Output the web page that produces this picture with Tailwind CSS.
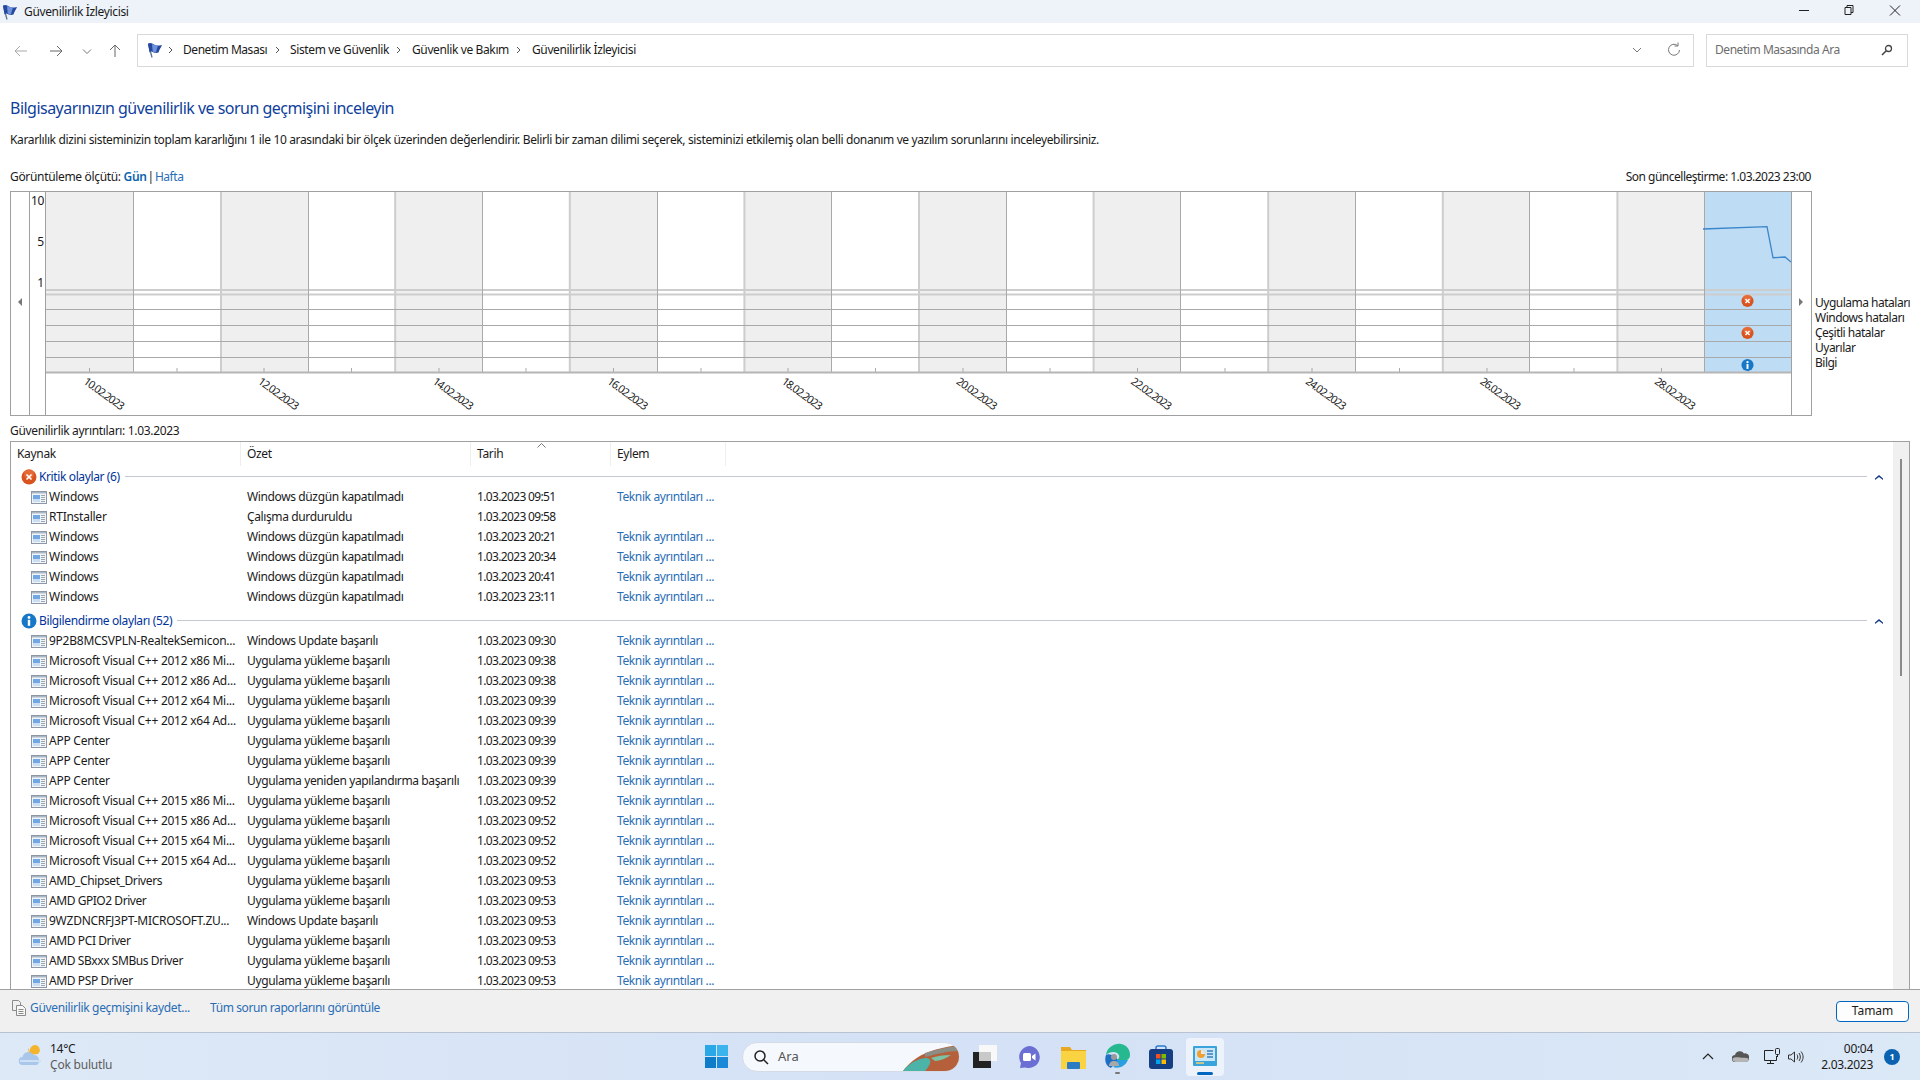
<!doctype html>
<html lang="tr"><head><meta charset="utf-8"><title>Güvenilirlik İzleyicisi</title>
<script src="https://cdn.jsdelivr.net/npm/@tailwindcss/browser@4"></script></head>
<body class="m-0">
<svg class="hidden" width="0" height="0">
<defs>
<symbol id="app" viewBox="0 0 16 16"><rect x="0.5" y="2.500" width="15" height="12" fill="#f1f4f8" stroke="#8c98a5"/><rect x="1" y="3" width="14" height="1.500" fill="#a9b6c4"/><rect x="2" y="6" width="7" height="7" fill="#6fa8e4"/><rect x="2" y="10" width="7" height="3" fill="#c9def3"/><path d="M10 6.500h4M10 8.500h4M10 10.500h4M10 12.500h4" stroke="#9aa6b2"/></symbol>
<symbol id="flag" viewBox="0 0 16 16"><path d="M1.500 2L5 15.500" stroke="#5f7390" stroke-width="1.300"/><path d="M1 1.500c3-1.500 5 .5 7 1.500s4 .5 7 0c-1 2.500-3 5-3.500 7.500-3 1-5 0-7-1-1 0-1.500 .5-2 1z" fill="#24479f"/><path d="M5 2.200c1 .2 2 .3 3 .8 1 .5 2 .6 3 .5-.5 2-1.500 4-2 6.900-1.200 0-2.200-.4-3.300-.9z" fill="#6f92dc"/></symbol>
<symbol id="err" viewBox="0 0 16 16"><circle cx="8" cy="8" r="7.500" fill="#d9531e"/><circle cx="8" cy="5" r="5" fill="#ec7a45" opacity=".6"/><path d="M5.500 5.500l5 5M10.500 5.500l-5 5" stroke="#fff" stroke-width="1.700"/></symbol>
<symbol id="info" viewBox="0 0 16 16"><circle cx="8" cy="8" r="7.500" fill="#1878c8"/><circle cx="8" cy="4.500" r="1.400" fill="#fff"/><rect x="6.800" y="6.800" width="2.400" height="6" fill="#fff"/></symbol>
</defs></svg>

<div class="flex h-[1080px] w-[1920px] flex-col overflow-hidden bg-white text-[12px] text-[#1a1a1a] font-['Noto_Sans',sans-serif]">

<!-- title bar -->
<div class="flex h-[23px] shrink-0 items-center bg-[#eef3fa] pl-[2px]">
<svg class="mr-[6px] h-[16px] w-[16px] shrink-0"><use href="#flag"/></svg>
<span class="tracking-[-0.35px]">Güvenilirlik İzleyicisi</span>
<div class="ml-auto flex items-center">
<svg width="45" height="23" viewBox="0 0 45 23"><path d="M15 10.500h10" stroke="#222"/></svg>
<svg width="45" height="23" viewBox="0 0 45 23"><path d="M16 7.500h6v7h-6zM18 7.500v-2h6v7h-2" fill="none" stroke="#222"/></svg>
<svg width="46" height="23" viewBox="0 0 46 23"><path d="M16 5.500l10 10M26 5.500l-10 10" stroke="#222"/></svg>
</div>
</div>

<!-- address row -->
<div class="flex h-[54px] shrink-0 items-center pl-[13px]">
<svg class="mt-[1px] shrink-0" width="124" height="16" viewBox="0 0 124 16" fill="none">
<path d="M14 8H2M7 3L2 8l5 5" stroke="#a8a8a8"/>
<path d="M37 8h12M44 3l5 5-5 5" stroke="#666"/>
<path d="M70 6.500l4 4 4-4" stroke="#777"/>
<path d="M102 14V2M97 7l5-5 5 5" stroke="#666"/>
</svg>
<div class="flex h-[33px] w-[1557px] shrink-0 items-center border border-[#d9d9d9] pl-[9px]">
<svg class="h-[16px] w-[16px] shrink-0"><use href="#flag"/></svg>
<svg class="ml-[5px] shrink-0" width="6" height="8" viewBox="0 0 6 8"><path d="M1 1l3 3-3 3" fill="none" stroke="#555"/></svg>
<span class="ml-[9px] w-[92px] shrink-0 whitespace-nowrap tracking-[-0.45px]">Denetim Masası</span>
<svg class="shrink-0" width="6" height="8" viewBox="0 0 6 8"><path d="M1 1l3 3-3 3" fill="none" stroke="#555"/></svg>
<span class="ml-[9px] w-[106px] shrink-0 whitespace-nowrap tracking-[-0.38px]">Sistem ve Güvenlik</span>
<svg class="shrink-0" width="6" height="8" viewBox="0 0 6 8"><path d="M1 1l3 3-3 3" fill="none" stroke="#555"/></svg>
<span class="ml-[10px] w-[104px] shrink-0 whitespace-nowrap tracking-[-0.38px]">Güvenlik ve Bakım</span>
<svg class="shrink-0" width="6" height="8" viewBox="0 0 6 8"><path d="M1 1l3 3-3 3" fill="none" stroke="#555"/></svg>
<span class="ml-[10px] whitespace-nowrap tracking-[-0.38px]">Güvenilirlik İzleyicisi</span>
<svg class="ml-auto mr-[13px] shrink-0" width="48" height="16" viewBox="0 0 48 16" fill="none"><path d="M1 6l4 4 4-4" stroke="#777"/><path d="M45.500 3.500a5.500 5.500 0 1 0 2 4.500M46 .5v3.500h-3.500" stroke="#777"/></svg>
</div>
<div class="ml-[12px] flex h-[33px] w-[202px] shrink-0 items-center border border-[#d9d9d9] pl-[8px] pr-[14px]">
<span class="text-[#6d6d6d] tracking-[-0.45px]">Denetim Masasında Ara</span>
<svg class="ml-auto shrink-0" width="12" height="12" viewBox="0 0 12 12" fill="none"><circle cx="7.500" cy="4.500" r="3" stroke="#444" stroke-width="1.300"/><path d="M5 7l-4 4" stroke="#444" stroke-width="1.600"/></svg>
</div>
</div>

<!-- heading -->
<div class="shrink-0 pl-[10px]">
<div class="mt-[20px] h-[22px] text-[16px] leading-[22px] text-[#0f3f9c] tracking-[-0.52px]">Bilgisayarınızın güvenilirlik ve sorun geçmişini inceleyin</div>
<div class="mt-[12px] h-[18px] leading-[18px] tracking-[-0.37px]">Kararlılık dizini sisteminizin toplam kararlığını 1 ile 10 arasındaki bir ölçek üzerinden değerlendirir. Belirli bir zaman dilimi seçerek, sisteminizi etkilemiş olan belli donanım ve yazılım sorunlarını inceleyebilirsiniz.</div>
<div class="mt-[19px] flex h-[18px] w-[1801px] items-center leading-[18px] tracking-[-0.33px]">
<span>Görüntüleme ölçütü:&nbsp;</span><span class="font-semibold text-[#0a63b0]">Gün</span><span class="mx-[1px]">|</span><span class="tracking-[-0.45px] text-[#2a6db5]">Hafta</span>
<span class="ml-auto tracking-[-0.5px]">Son güncelleştirme: 1.03.2023 23:00</span>
</div>
</div>

<!-- chart -->
<div class="mt-[5px] flex h-[225px] shrink-0 pl-[10px]">
<div class="flex h-[225px] w-[1802px] shrink-0 border border-[#a0a0a0]">
<div class="flex w-[19px] shrink-0 items-center justify-center border-r border-[#a0a0a0] pb-[3px]">
<svg width="5" height="8" viewBox="0 0 5 8"><path d="M4 0v8L0 4z" fill="#777"/></svg>
</div>
<div class="relative w-[16px] shrink-0 border-r border-[#a0a0a0] text-right">
<span class="absolute right-[1px] top-[1px] leading-[16px] tracking-[-0.4px]">10</span>
<span class="absolute right-[1px] top-[42px] leading-[16px]">5</span>
<span class="absolute right-[1px] top-[83px] leading-[16px]">1</span>
</div>
<svg class="shrink-0" width="1745" height="223" viewBox="0 0 1745 223">
<g fill="#efefef">
<rect x="0" y="0" width="87.300" height="180"/><rect x="174.600" y="0" width="87.300" height="180"/><rect x="349.200" y="0" width="87.300" height="180"/><rect x="523.800" y="0" width="87.300" height="180"/><rect x="698.400" y="0" width="87.300" height="180"/><rect x="873" y="0" width="87.300" height="180"/><rect x="1047.600" y="0" width="87.300" height="180"/><rect x="1222.200" y="0" width="87.300" height="180"/><rect x="1396.800" y="0" width="87.300" height="180"/><rect x="1571.400" y="0" width="87.300" height="180"/>
</g>
<rect x="1658.500" y="0" width="86.500" height="180" fill="#bfdcf5"/>
<g stroke="#cdcdcd" stroke-width="2">
<path d="M175 0v180M349.200 0v180M523.800 0v180M698.400 0v180M873 0v180M1047.600 0v180M1222.200 0v180M1396.800 0v180M1571.400 0v180"/>
<path d="M0 98H1745M0 102.500H1745"/>
</g>
<g stroke="#a9a9a9" stroke-width="1">
<path d="M87.500 0v180M262.500 0v180M436.500 0v180M611.500 0v180M785.500 0v180M960.500 0v180M1134.500 0v180M1309.500 0v180M1483.500 0v180M1658.500 0v180"/>
<path d="M0 117.500H1745M0 133.500H1745M0 149.500H1745M0 165.500H1745"/>
<path d="M43.500 176v5M131 176v5M218 176v5M305.500 176v5M393 176v5M480 176v5M567.500 176v5M655 176v5M742 176v5M829.500 176v5M917 176v5M1004 176v5M1091.500 176v5M1179 176v5M1266 176v5M1353.500 176v5M1441 176v5M1528 176v5M1615.500 176v5M1702.500 176v5"/>
</g>
<path d="M0 180.500H1745" stroke="#b5b5b5" stroke-width="2"/>
<path d="M1657 37L1721 34.700L1727 65.700L1739 65L1745 70" fill="none" stroke="#3a86c8" stroke-width="1.300"/>
<use href="#err" x="1695" y="102.500" width="13" height="13"/>
<use href="#err" x="1695" y="134.500" width="13" height="13"/>
<use href="#info" x="1695" y="166.500" width="13" height="13"/>
<g font-size="11" fill="#1a1a1a" text-anchor="middle" letter-spacing="-1">
<text transform="translate(55.500 204.500) rotate(36)">10.02.2023</text>
<text transform="translate(230 204.500) rotate(36)">12.02.2023</text>
<text transform="translate(404.600 204.500) rotate(36)">14.02.2023</text>
<text transform="translate(579.200 204.500) rotate(36)">16.02.2023</text>
<text transform="translate(753.700 204.500) rotate(36)">18.02.2023</text>
<text transform="translate(928.300 204.500) rotate(36)">20.02.2023</text>
<text transform="translate(1102.800 204.500) rotate(36)">22.02.2023</text>
<text transform="translate(1277.400 204.500) rotate(36)">24.02.2023</text>
<text transform="translate(1451.900 204.500) rotate(36)">26.02.2023</text>
<text transform="translate(1626.500 204.500) rotate(36)">28.02.2023</text>
</g>
</svg>
<div class="flex w-[20px] shrink-0 items-center justify-center border-l border-[#a0a0a0] pb-[3px]">
<svg width="5" height="8" viewBox="0 0 5 8"><path d="M0 0v8l4-4z" fill="#777"/></svg>
</div>
</div>
<div class="ml-[3px] mt-[104px] flex flex-col whitespace-nowrap leading-[15px] tracking-[-0.5px]">
<span>Uygulama hataları</span><span>Windows hataları</span><span>Çeşitli hatalar</span><span>Uyarılar</span><span>Bilgi</span>
</div>
</div>

<div class="mt-[6px] h-[18px] shrink-0 pl-[10px] leading-[18px] tracking-[-0.33px]">Güvenilirlik ayrıntıları: 1.03.2023</div>

<!-- table -->
<div class="ml-[10px] mt-[1px] flex h-[548px] w-[1900px] shrink-0 overflow-hidden border border-b-0 border-[#a0a0a0] tracking-[-0.38px]">
<div class="relative min-w-0 flex-1 overflow-hidden">
<div class="flex h-[24px] items-center tracking-[-0.33px]">
<div class="h-[24px] w-[230px] border-r border-[#eeeeee] pl-[6px] leading-[24px]">Kaynak</div>
<div class="h-[24px] w-[230px] border-r border-[#eeeeee] pl-[6px] leading-[24px]">Özet</div>
<div class="relative h-[24px] w-[140px] border-r border-[#eeeeee] pl-[6px] leading-[24px]">Tarih
<svg class="absolute left-[66px] top-[1px]" width="9" height="5" viewBox="0 0 9 5"><path d="M.5 4.500l4-4 4 4" fill="none" stroke="#777"/></svg>
</div>
<div class="h-[24px] w-[115px] border-r border-[#eeeeee] pl-[6px] leading-[24px]">Eylem</div>
</div>

<div class="flex h-[21px] items-center pl-[10px] text-[#003399]">
<svg class="mr-[2px] h-[16px] w-[16px] shrink-0"><use href="#err"/></svg><span>Kritik olaylar (6)</span>
<div class="ml-[5px] h-px flex-1 bg-[#c3c8d3]"></div>
<svg class="ml-[8px] mr-[10px] shrink-0" width="8" height="6" viewBox="0 0 8 6"><path d="M0 4.500L4 1l4 3.500V6L4 3 0 6z" fill="#123a84"/></svg>
</div>
<div class="flex h-[20px] items-center pl-[20px]"><svg class="mr-[2px] h-[16px] w-[16px] shrink-0"><use href="#app"/></svg><span class="w-[198px] whitespace-nowrap tracking-[-0.25px]">Windows</span><span class="w-[230px] whitespace-nowrap">Windows düzgün kapatılmadı</span><span class="w-[140px] whitespace-nowrap tracking-[-0.65px]">1.03.2023 09:51</span><span class="text-[#2a6db5]">Teknik ayrıntıları ...</span></div>
<div class="flex h-[20px] items-center pl-[20px]"><svg class="mr-[2px] h-[16px] w-[16px] shrink-0"><use href="#app"/></svg><span class="w-[198px] whitespace-nowrap tracking-[-0.25px]">RTInstaller</span><span class="w-[230px] whitespace-nowrap">Çalışma durduruldu</span><span class="w-[140px] whitespace-nowrap tracking-[-0.65px]">1.03.2023 09:58</span></div>
<div class="flex h-[20px] items-center pl-[20px]"><svg class="mr-[2px] h-[16px] w-[16px] shrink-0"><use href="#app"/></svg><span class="w-[198px] whitespace-nowrap tracking-[-0.25px]">Windows</span><span class="w-[230px] whitespace-nowrap">Windows düzgün kapatılmadı</span><span class="w-[140px] whitespace-nowrap tracking-[-0.65px]">1.03.2023 20:21</span><span class="text-[#2a6db5]">Teknik ayrıntıları ...</span></div>
<div class="flex h-[20px] items-center pl-[20px]"><svg class="mr-[2px] h-[16px] w-[16px] shrink-0"><use href="#app"/></svg><span class="w-[198px] whitespace-nowrap tracking-[-0.25px]">Windows</span><span class="w-[230px] whitespace-nowrap">Windows düzgün kapatılmadı</span><span class="w-[140px] whitespace-nowrap tracking-[-0.65px]">1.03.2023 20:34</span><span class="text-[#2a6db5]">Teknik ayrıntıları ...</span></div>
<div class="flex h-[20px] items-center pl-[20px]"><svg class="mr-[2px] h-[16px] w-[16px] shrink-0"><use href="#app"/></svg><span class="w-[198px] whitespace-nowrap tracking-[-0.25px]">Windows</span><span class="w-[230px] whitespace-nowrap">Windows düzgün kapatılmadı</span><span class="w-[140px] whitespace-nowrap tracking-[-0.65px]">1.03.2023 20:41</span><span class="text-[#2a6db5]">Teknik ayrıntıları ...</span></div>
<div class="flex h-[20px] items-center pl-[20px]"><svg class="mr-[2px] h-[16px] w-[16px] shrink-0"><use href="#app"/></svg><span class="w-[198px] whitespace-nowrap tracking-[-0.25px]">Windows</span><span class="w-[230px] whitespace-nowrap">Windows düzgün kapatılmadı</span><span class="w-[140px] whitespace-nowrap tracking-[-0.65px]">1.03.2023 23:11</span><span class="text-[#2a6db5]">Teknik ayrıntıları ...</span></div>

<div class="mt-[3px] flex h-[21px] items-center pl-[10px] text-[#003399]">
<svg class="mr-[2px] h-[16px] w-[16px] shrink-0"><use href="#info"/></svg><span>Bilgilendirme olayları (52)</span>
<div class="ml-[5px] h-px flex-1 bg-[#c3c8d3]"></div>
<svg class="ml-[8px] mr-[10px] shrink-0" width="8" height="6" viewBox="0 0 8 6"><path d="M0 4.500L4 1l4 3.500V6L4 3 0 6z" fill="#123a84"/></svg>
</div>
<div class="flex h-[20px] items-center pl-[20px]"><svg class="mr-[2px] h-[16px] w-[16px] shrink-0"><use href="#app"/></svg><span class="w-[198px] whitespace-nowrap tracking-[-0.25px]">9P2B8MCSVPLN-RealtekSemicon...</span><span class="w-[230px] whitespace-nowrap">Windows Update başarılı</span><span class="w-[140px] whitespace-nowrap tracking-[-0.65px]">1.03.2023 09:30</span><span class="text-[#2a6db5]">Teknik ayrıntıları ...</span></div>
<div class="flex h-[20px] items-center pl-[20px]"><svg class="mr-[2px] h-[16px] w-[16px] shrink-0"><use href="#app"/></svg><span class="w-[198px] whitespace-nowrap tracking-[-0.25px]">Microsoft Visual C++ 2012 x86 Mi...</span><span class="w-[230px] whitespace-nowrap">Uygulama yükleme başarılı</span><span class="w-[140px] whitespace-nowrap tracking-[-0.65px]">1.03.2023 09:38</span><span class="text-[#2a6db5]">Teknik ayrıntıları ...</span></div>
<div class="flex h-[20px] items-center pl-[20px]"><svg class="mr-[2px] h-[16px] w-[16px] shrink-0"><use href="#app"/></svg><span class="w-[198px] whitespace-nowrap tracking-[-0.25px]">Microsoft Visual C++ 2012 x86 Ad...</span><span class="w-[230px] whitespace-nowrap">Uygulama yükleme başarılı</span><span class="w-[140px] whitespace-nowrap tracking-[-0.65px]">1.03.2023 09:38</span><span class="text-[#2a6db5]">Teknik ayrıntıları ...</span></div>
<div class="flex h-[20px] items-center pl-[20px]"><svg class="mr-[2px] h-[16px] w-[16px] shrink-0"><use href="#app"/></svg><span class="w-[198px] whitespace-nowrap tracking-[-0.25px]">Microsoft Visual C++ 2012 x64 Mi...</span><span class="w-[230px] whitespace-nowrap">Uygulama yükleme başarılı</span><span class="w-[140px] whitespace-nowrap tracking-[-0.65px]">1.03.2023 09:39</span><span class="text-[#2a6db5]">Teknik ayrıntıları ...</span></div>
<div class="flex h-[20px] items-center pl-[20px]"><svg class="mr-[2px] h-[16px] w-[16px] shrink-0"><use href="#app"/></svg><span class="w-[198px] whitespace-nowrap tracking-[-0.25px]">Microsoft Visual C++ 2012 x64 Ad...</span><span class="w-[230px] whitespace-nowrap">Uygulama yükleme başarılı</span><span class="w-[140px] whitespace-nowrap tracking-[-0.65px]">1.03.2023 09:39</span><span class="text-[#2a6db5]">Teknik ayrıntıları ...</span></div>
<div class="flex h-[20px] items-center pl-[20px]"><svg class="mr-[2px] h-[16px] w-[16px] shrink-0"><use href="#app"/></svg><span class="w-[198px] whitespace-nowrap tracking-[-0.25px]">APP Center</span><span class="w-[230px] whitespace-nowrap">Uygulama yükleme başarılı</span><span class="w-[140px] whitespace-nowrap tracking-[-0.65px]">1.03.2023 09:39</span><span class="text-[#2a6db5]">Teknik ayrıntıları ...</span></div>
<div class="flex h-[20px] items-center pl-[20px]"><svg class="mr-[2px] h-[16px] w-[16px] shrink-0"><use href="#app"/></svg><span class="w-[198px] whitespace-nowrap tracking-[-0.25px]">APP Center</span><span class="w-[230px] whitespace-nowrap">Uygulama yükleme başarılı</span><span class="w-[140px] whitespace-nowrap tracking-[-0.65px]">1.03.2023 09:39</span><span class="text-[#2a6db5]">Teknik ayrıntıları ...</span></div>
<div class="flex h-[20px] items-center pl-[20px]"><svg class="mr-[2px] h-[16px] w-[16px] shrink-0"><use href="#app"/></svg><span class="w-[198px] whitespace-nowrap tracking-[-0.25px]">APP Center</span><span class="w-[230px] whitespace-nowrap">Uygulama yeniden yapılandırma başarılı</span><span class="w-[140px] whitespace-nowrap tracking-[-0.65px]">1.03.2023 09:39</span><span class="text-[#2a6db5]">Teknik ayrıntıları ...</span></div>
<div class="flex h-[20px] items-center pl-[20px]"><svg class="mr-[2px] h-[16px] w-[16px] shrink-0"><use href="#app"/></svg><span class="w-[198px] whitespace-nowrap tracking-[-0.25px]">Microsoft Visual C++ 2015 x86 Mi...</span><span class="w-[230px] whitespace-nowrap">Uygulama yükleme başarılı</span><span class="w-[140px] whitespace-nowrap tracking-[-0.65px]">1.03.2023 09:52</span><span class="text-[#2a6db5]">Teknik ayrıntıları ...</span></div>
<div class="flex h-[20px] items-center pl-[20px]"><svg class="mr-[2px] h-[16px] w-[16px] shrink-0"><use href="#app"/></svg><span class="w-[198px] whitespace-nowrap tracking-[-0.25px]">Microsoft Visual C++ 2015 x86 Ad...</span><span class="w-[230px] whitespace-nowrap">Uygulama yükleme başarılı</span><span class="w-[140px] whitespace-nowrap tracking-[-0.65px]">1.03.2023 09:52</span><span class="text-[#2a6db5]">Teknik ayrıntıları ...</span></div>
<div class="flex h-[20px] items-center pl-[20px]"><svg class="mr-[2px] h-[16px] w-[16px] shrink-0"><use href="#app"/></svg><span class="w-[198px] whitespace-nowrap tracking-[-0.25px]">Microsoft Visual C++ 2015 x64 Mi...</span><span class="w-[230px] whitespace-nowrap">Uygulama yükleme başarılı</span><span class="w-[140px] whitespace-nowrap tracking-[-0.65px]">1.03.2023 09:52</span><span class="text-[#2a6db5]">Teknik ayrıntıları ...</span></div>
<div class="flex h-[20px] items-center pl-[20px]"><svg class="mr-[2px] h-[16px] w-[16px] shrink-0"><use href="#app"/></svg><span class="w-[198px] whitespace-nowrap tracking-[-0.25px]">Microsoft Visual C++ 2015 x64 Ad...</span><span class="w-[230px] whitespace-nowrap">Uygulama yükleme başarılı</span><span class="w-[140px] whitespace-nowrap tracking-[-0.65px]">1.03.2023 09:52</span><span class="text-[#2a6db5]">Teknik ayrıntıları ...</span></div>
<div class="flex h-[20px] items-center pl-[20px]"><svg class="mr-[2px] h-[16px] w-[16px] shrink-0"><use href="#app"/></svg><span class="w-[198px] whitespace-nowrap tracking-[-0.4px]">AMD_Chipset_Drivers</span><span class="w-[230px] whitespace-nowrap">Uygulama yükleme başarılı</span><span class="w-[140px] whitespace-nowrap tracking-[-0.65px]">1.03.2023 09:53</span><span class="text-[#2a6db5]">Teknik ayrıntıları ...</span></div>
<div class="flex h-[20px] items-center pl-[20px]"><svg class="mr-[2px] h-[16px] w-[16px] shrink-0"><use href="#app"/></svg><span class="w-[198px] whitespace-nowrap tracking-[-0.45px]">AMD GPIO2 Driver</span><span class="w-[230px] whitespace-nowrap">Uygulama yükleme başarılı</span><span class="w-[140px] whitespace-nowrap tracking-[-0.65px]">1.03.2023 09:53</span><span class="text-[#2a6db5]">Teknik ayrıntıları ...</span></div>
<div class="flex h-[20px] items-center pl-[20px]"><svg class="mr-[2px] h-[16px] w-[16px] shrink-0"><use href="#app"/></svg><span class="w-[198px] whitespace-nowrap tracking-[-0.25px]">9WZDNCRFJ3PT-MICROSOFT.ZU...</span><span class="w-[230px] whitespace-nowrap">Windows Update başarılı</span><span class="w-[140px] whitespace-nowrap tracking-[-0.65px]">1.03.2023 09:53</span><span class="text-[#2a6db5]">Teknik ayrıntıları ...</span></div>
<div class="flex h-[20px] items-center pl-[20px]"><svg class="mr-[2px] h-[16px] w-[16px] shrink-0"><use href="#app"/></svg><span class="w-[198px] whitespace-nowrap tracking-[-0.4px]">AMD PCI Driver</span><span class="w-[230px] whitespace-nowrap">Uygulama yükleme başarılı</span><span class="w-[140px] whitespace-nowrap tracking-[-0.65px]">1.03.2023 09:53</span><span class="text-[#2a6db5]">Teknik ayrıntıları ...</span></div>
<div class="flex h-[20px] items-center pl-[20px]"><svg class="mr-[2px] h-[16px] w-[16px] shrink-0"><use href="#app"/></svg><span class="w-[198px] whitespace-nowrap tracking-[-0.42px]">AMD SBxxx SMBus Driver</span><span class="w-[230px] whitespace-nowrap">Uygulama yükleme başarılı</span><span class="w-[140px] whitespace-nowrap tracking-[-0.65px]">1.03.2023 09:53</span><span class="text-[#2a6db5]">Teknik ayrıntıları ...</span></div>
<div class="flex h-[20px] items-center pl-[20px]"><svg class="mr-[2px] h-[16px] w-[16px] shrink-0"><use href="#app"/></svg><span class="w-[198px] whitespace-nowrap tracking-[-0.4px]">AMD PSP Driver</span><span class="w-[230px] whitespace-nowrap">Uygulama yükleme başarılı</span><span class="w-[140px] whitespace-nowrap tracking-[-0.65px]">1.03.2023 09:53</span><span class="text-[#2a6db5]">Teknik ayrıntıları ...</span></div>
</div>
<div class="flex w-[16px] shrink-0 justify-center bg-[#f0f0f0] pt-[17px]">
<div class="h-[217px] w-[2px] bg-[#8a8a8a]"></div>
</div>
</div>

<!-- footer -->
<div class="flex h-[43px] shrink-0 items-center border-t border-[#a0a0a0] bg-[#f0f0f0] pl-[12px] pr-[11px]">
<svg class="mb-[6px] shrink-0" width="14" height="16" viewBox="0 0 14 16" fill="none" stroke="#8a8a8a"><path d="M.5.5h6l2 2v3M.5.5v10h4"/><path d="M4.500 5.500h6l3 3v7h-9z" fill="#f8f8f8"/><path d="M6.500 9.500h5M6.500 11.500h5M6.500 13.500h5"/></svg>
<span class="mb-[6px] ml-[4px] w-[180px] tracking-[-0.33px] text-[#2a6db5]">Güvenilirlik geçmişini kaydet...</span>
<span class="mb-[6px] tracking-[-0.4px] text-[#2a6db5]">Tüm sorun raporlarını görüntüle</span>
<div class="ml-auto flex h-[21px] w-[73px] items-center justify-center rounded-[4px] border border-[#0067c0] bg-[#fdfdfd]">Tamam</div>
</div>

<!-- taskbar -->
<div class="flex h-[48px] shrink-0 items-center border-t border-[#b9c2d0] bg-gradient-to-r from-[#dde9f6] via-[#d4e1f6] to-[#dbe8f6]">
<div class="flex w-[705px] shrink-0 items-center pl-[18px]">
<svg class="shrink-0" width="26" height="26" viewBox="0 0 26 26"><path d="M12 5a5 5 0 1 1 8 5l-10 1z" fill="#f3b42e"/><path d="M11 4a6 6 0 0 0 5 9 7 7 0 0 1-10-3 5 5 0 0 0 5-6z" fill="#f0a01e"/><path d="M5 21a4 4 0 0 1-.500-8 6 6 0 0 1 11-2 5 5 0 0 1 5.500 5 5 5 0 0 1-2 5z" fill="#a9c7ea"/><path d="M2 17h21" stroke="#cfe0f4" stroke-width="2"/></svg>
<div class="ml-[6px] flex flex-col whitespace-nowrap text-[12px] leading-[16px]">
<span class="tracking-[-0.3px]">14°C</span><span class="tracking-[-0.2px] text-[#5c5c5c]">Çok bulutlu</span>
</div>
</div>

<svg class="shrink-0" width="23" height="23" viewBox="0 0 23 23"><rect width="11" height="11" fill="#2aa7e6"/><rect x="12" width="11" height="11" fill="#3bb4ee"/><rect y="12" width="11" height="11" fill="#0f7cc9"/><rect x="12" y="12" width="11" height="11" fill="#1a8ad8"/></svg>

<div class="relative ml-[14px] flex h-[30px] w-[218px] shrink-0 items-center overflow-hidden rounded-[15px] border border-[#d5dbe5] bg-[#f5f8fd] pl-[10px]">
<svg class="shrink-0" width="16" height="16" viewBox="0 0 16 16" fill="none" stroke="#222" stroke-width="1.500"><circle cx="7" cy="7" r="5"/><path d="M10.500 10.500l4.500 4.500"/></svg>
<span class="ml-[9px] text-[13px] text-[#555]">Ara</span>
<svg class="absolute bottom-0 right-0" width="58" height="30" viewBox="0 0 58 30"><path d="M2 30C14 14 30 8 58 4v26z" fill="#b5603a"/><path d="M2 30C10 20 18 18 24 17c8 0 6 6 0 13z" fill="#4bb3a8"/><path d="M24 12c10-3 22-6 34-7v5c-12 0-22 3-34 6z" fill="#8c8d84"/><path d="M30 17c6-2 12-3 20-3-4 3-12 6-16 6z" fill="#7ac3a6"/></svg>
</div>

<svg class="ml-[13px] shrink-0" width="24" height="23" viewBox="0 0 24 23"><rect x="6" y="0" width="18" height="16" fill="#f8f8f8"/><rect x="0" y="7" width="18" height="16" fill="#222"/><rect x="6" y="7" width="12" height="9" fill="#c9c9c9"/></svg>

<svg class="ml-[20px] shrink-0" width="24" height="24" viewBox="0 0 24 24"><path d="M12 1a11 11 0 1 1-3.500 21.500L3 23l1-5A11 11 0 0 1 12 1z" fill="#6b6fd4"/><rect x="6" y="8" width="8" height="8" rx="1.500" fill="#fff"/><path d="M15 11l3.500-2.500v7L15 13z" fill="#fff"/></svg>

<svg class="ml-[20px] shrink-0" width="25" height="24" viewBox="0 0 25 24"><path d="M0 2h9l2 3h14v4H0z" fill="#e8a820"/><rect x="0" y="6" width="25" height="18" fill="#f9d342"/><rect x="6" y="17" width="13" height="7" rx="1" fill="#2c7cc4"/></svg>

<svg class="ml-[19px] shrink-0" width="25" height="34" viewBox="0 0 25 34"><g transform="translate(0 4)"><path d="M1 11C2 3 10-1 16 0c6 1 9 6 9 11 0 2-1 4-3 5H12c3-2 3-5 0-7-3-2-8-1-11 2z" fill="#26b88e"/><path d="M1 11c-2 6 0 11 5 13 2-3 6-3 7-8-3-5-9-7-12-5z" fill="#1b6fc4"/><path d="M12 16h11c-3 7-10 9-15 7 2-1 4-3 4-7z" fill="#2a9fe0"/><circle cx="9" cy="13" r="3" fill="#9a9a9a"/><path d="M4 22c0-3 2-5 5-5s5 2 5 5z" fill="#a8a8a8"/></g><rect x="10" y="32" width="5" height="2" rx="1" fill="#777"/></svg>

<svg class="ml-[19px] shrink-0" width="24" height="24" viewBox="0 0 24 24"><path d="M7 5V3a2 2 0 0 1 2-2h6a2 2 0 0 1 2 2v2" fill="none" stroke="#2b7bd0" stroke-width="1.500"/><rect y="4" width="24" height="20" rx="3" fill="#153f82"/><rect x="7" y="9" width="4.500" height="4.500" fill="#f25022"/><rect x="12.500" y="9" width="4.500" height="4.500" fill="#7fba00"/><rect x="7" y="14.500" width="4.500" height="4.500" fill="#00a4ef"/><rect x="12.500" y="14.500" width="4.500" height="4.500" fill="#ffb900"/></svg>

<div class="relative ml-[13px] flex h-[38px] w-[38px] shrink-0 items-center justify-center rounded-[4px] bg-[#eef3fb]">
<svg class="mb-[2px]" width="24" height="20" viewBox="0 0 24 20"><rect width="24" height="20" rx="1" fill="#3aa3dc"/><rect x="2" y="2" width="20" height="13" fill="#c9e7f8"/><circle cx="8" cy="8" r="4" fill="#f0a030"/><path d="M8 8V4a4 4 0 0 1 4 4z" fill="#e8e8e8"/><path d="M14 5h6M14 8h6M14 11h6" stroke="#3a7fb8" stroke-width="1.500"/><path d="M3 17h8" stroke="#f7d070" stroke-width="1.500"/></svg>
<div class="absolute bottom-[1px] left-[11px] h-[3px] w-[16px] rounded-full bg-[#0067c0]"></div>
</div>

<div class="ml-auto flex shrink-0 items-center pr-[20px]">
<svg class="shrink-0" width="12" height="7" viewBox="0 0 12 7" fill="none"><path d="M1 6l5-5 5 5" stroke="#222" stroke-width="1.200"/></svg>
<svg class="ml-[18px] shrink-0" width="17" height="11" viewBox="0 0 17 11"><path d="M3.500 11a3.500 3.500 0 0 1-.500-7 5 5 0 0 1 9-1.500 4 4 0 0 1 2 8.500z" fill="#555"/><path d="M.5 7.500C2 6 5 6 8 6.500s6 0 8.500 1V8a3 3 0 0 1-3 3h-10A3.500 3.500 0 0 1 .5 7.500z" fill="#b5b5b5"/></svg>
<svg class="ml-[15px] shrink-0" width="17" height="17" viewBox="0 0 17 17" fill="none" stroke="#222"><path d="M9.500 2.500H.5v10h12V8M6.500 12.500v3M3 15.500h7"/><rect x="11.500" y=".5" width="4" height="6" rx="1"/><path d="M13.500 6.500V9"/></svg>
<svg class="ml-[7px] shrink-0" width="16" height="14" viewBox="0 0 16 14" fill="none" stroke="#333"><path d="M.5 5v4h2.500L6.500 12V2L3 5zM9 4.500c1 1.500 1 3.500 0 5M11 3c1.800 2.500 1.800 5.500 0 8M13 1.500c2.800 3.500 2.800 7.500 0 11"/></svg>
<div class="ml-[17px] flex flex-col items-end whitespace-nowrap leading-[16px] tracking-[-0.3px]">
<span>00:04</span><span>2.03.2023</span>
</div>
<div class="ml-[11px] flex h-[16px] w-[16px] items-center justify-center rounded-full bg-[#0b62b0] text-[9px] font-bold text-white">1</div>
</div>
</div>
</div>
</body></html>
